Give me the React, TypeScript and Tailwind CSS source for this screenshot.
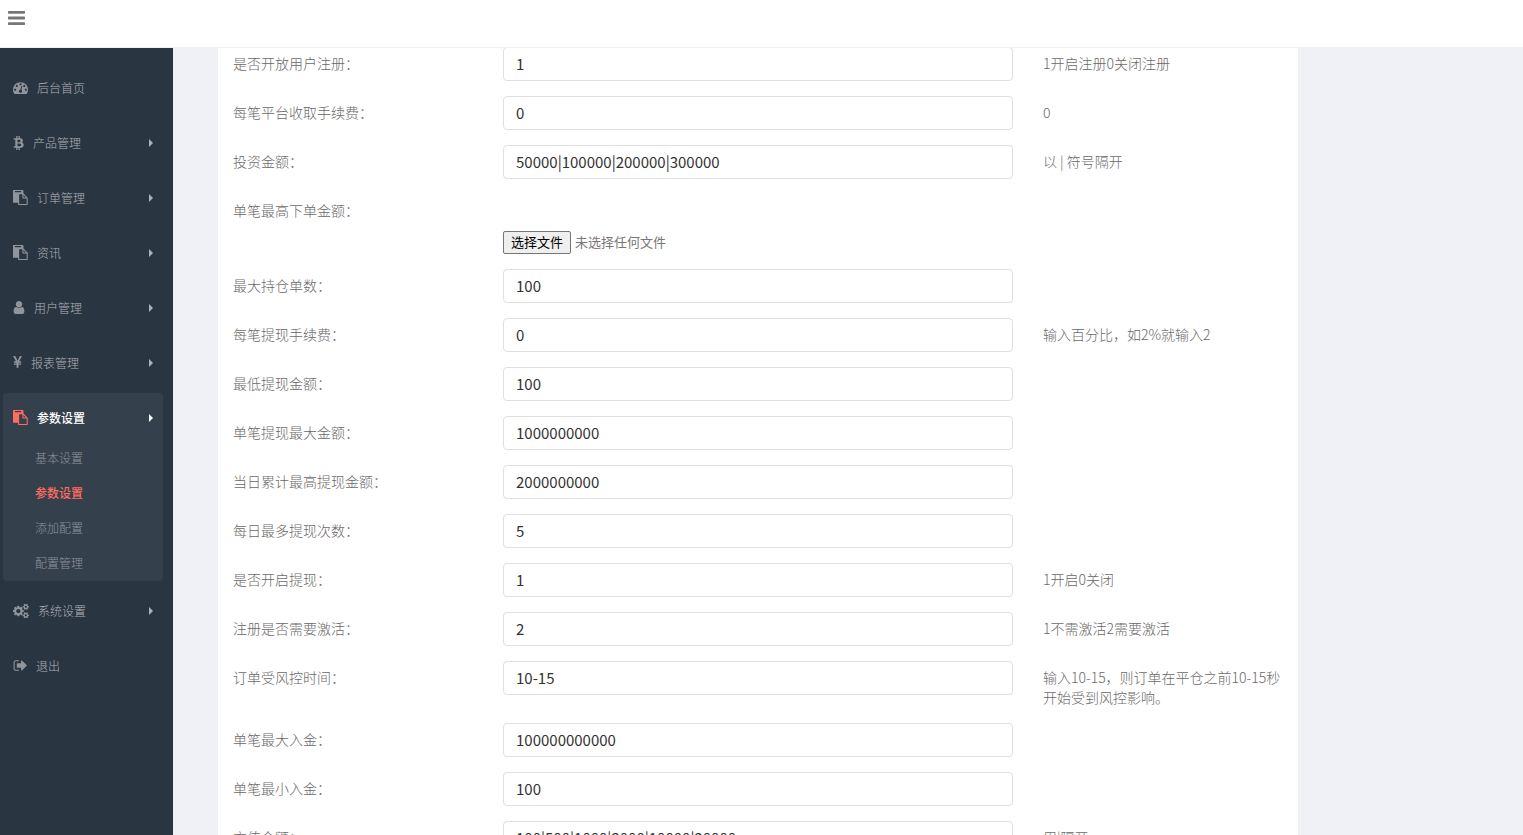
import { useState } from "react";

type Glyph = { box: string; size: string; path: string };

const smallCog =
  "v140q0 16-149 31-12 27-30 52 51 113 51 138 0 4-4 7-122 71-124 71-8 0-46-47t-52-68q-20 2-30 2t-30-2q-14 21-52 68t-46 47q-2 0-124-71-4-3-4-7 0-25 51-138-18-25-30-52-149-15-149-31v-140q0-16 149-31 13-29 30-52-51-113-51-138 0-4 4-7 4-2 35-20t59-34 30-16q8 0 46 46.5t52 67.5q20-2 30-2t30 2q51-71 92-112l6-2q4 0 124 70 4 3 4 7 0 25-51 138 17 23 30 52 149 15 149 31z";

const smallDot =
  "q0-53-37.5-90.5t-90.5-37.5-90.5 37.5-37.5 90.5 37.5 90.5 90.5 37.5 90.5-37.5 37.5-90.5z";

const glyphs = {
  dashboard: {
    box: "0 0 1792 1792",
    size: "w-[15px]",
    path:
      "M384 1152" + smallDot + "m192-448" + smallDot +
      "m428 481l101-382q6-26-7.5-48.5t-38.5-29.5-48 6.5-30 39.5l-101 382q-60 5-107 43.5t-63 98.5q-20 77 20 146t117 89 146-20 89-117q16-60-6-117t-72-91zm660-33" +
      smallDot + "m-640-640" + smallDot + "m448 192" + smallDot +
      "m320 448q0 261-141 483-19 29-54 29h-1402q-35 0-54-29-141-221-141-483 0-182 71-348t191-286 286-191 348-71 348 71 286 191 191 286 71 348z",
  },
  bitcoin: {
    box: "0 0 1280 1792",
    size: "w-[11px]",
    path: "M1167 640q18 182-131 258 117 28 175 103t45 214q-7 71-32.5 125t-64.5 89-97 58.5-121.5 34.5-145.5 15v255h-154v-251q-80 0-122-1v252h-154v-255q-18 0-54-.5t-55-.5h-200l31-183h111q50 0 58-51v-402h16q-6-1-16-1v-287q-13-68-89-68h-111v-164l212 1q64 0 97-1v-252h154v247q82-2 122-2v-245h154v252q79 7 140 22.5t113 45 82.5 78 36.5 114.5zm-215 545q0-36-15-64t-37-46-57.5-30.5-65.5-18.5-74-9-69-3-64.5 1-47.5 1v338q8 0 37 .5t48 .5 53-1.5 58.5-4 57-8.5 55.5-14 47.5-21 39.5-30 24.5-40 9.5-51zm-71-476q0-33-12.5-58.5t-30.5-42-48-28-55-16.5-61.5-8-58-2.5-54 1-39.5.5v307q5 0 34.5.5t46.5 0 50-2 55-5.5 51.5-11 48.5-18.5 37-27 27-38.5 9-51z",
  },
  paste: {
    box: "64 0 1728 1792",
    size: "w-[15px]",
    path: "M768 1664h896v-640h-416q-40 0-68-28t-28-68v-416h-384v1152zm256-1440v-64q0-13-9.5-22.5t-22.5-9.5h-704q-13 0-22.5 9.5t-9.5 22.5v64q0 13 9.5 22.5t22.5 9.5h704q13 0 22.5-9.5t9.5-22.5zm256 672h299l-299-299v299zm512 128v672q0 40-28 68t-68 28h-960q-40 0-68-28t-28-68v-160h-544q-40 0-68-28t-28-68v-1344q0-40 28-68t68-28h1088q40 0 68 28t28 68v328q21 13 36 28l408 408q28 28 48 76t20 88z",
  },
  user: {
    box: "256 0 1280 1792",
    size: "w-[12px]",
    path: "M1536 1399q0 109-62.5 187t-150.5 78h-854q-88 0-150.5-78t-62.5-187q0-85 8.5-160.5t31.5-152 58.5-131 94-89 134.5-34.5q131 128 313 128t313-128q76 0 134.5 34.5t94 89 58.5 131 31.5 152 8.5 160.5zm-256-887q0 159-112.5 271.5t-271.5 112.5-271.5-112.5-112.5-271.5 112.5-271.5 271.5-112.5 271.5 112.5 112.5 271.5z",
  },
  yen: {
    box: "380 0 1027 1792",
    size: "w-[9px]",
    path: "M985.5 1536h-172q-13 0-22.5-9t-9.5-23v-330h-288q-13 0-22.5-9t-9.5-23v-103q0-13 9.5-22.5t22.5-9.5h288v-85h-288q-13 0-22.5-9t-9.5-23v-104q0-13 9.5-22.5t22.5-9.5h214l-321-578q-8-16 0-32 10-16 28-16h194q19 0 29 18l215 425q19 38 56 125 10-24 30.5-68t27.5-61l191-420q8-19 29-19h191q17 0 27 16 9 14 1 31l-313 579h215q13 0 22.5 9.5t9.5 22.5v104q0 14-9.5 23t-22.5 9h-290v85h290q13 0 22.5 9.5t9.5 22.5v103q0 14-9.5 23t-22.5 9h-290v330q0 13-9.5 22.5t-22.5 9.5z",
  },
  cogs: {
    box: "0 0 1920 1792",
    size: "w-[16px]",
    path:
      "M896 960q0-106-75-181t-181-75-181 75-75 181 75 181 181 75 181-75 75-181zm768 512q0-52-38-90t-90-38-90 38-38 90q0 53 37.5 90.5t90.5 37.5 90.5-37.5 37.5-90.5zm0-1024q0-52-38-90t-90-38-90 38-38 90q0 53 37.5 90.5t90.5 37.5 90.5-37.5 37.5-90.5zm-384 421v185q0 10-7 19.5t-16 10.5l-155 24q-11 35-32 76 34 48 90 115 7 10 7 20 0 12-7 19-23 30-82.5 89.5t-78.5 59.5q-11 0-21-7l-115-90q-37 19-77 31-11 108-23 155-7 24-30 24h-186q-11 0-20-7.5t-10-17.5l-23-153q-34-10-75-31l-118 89q-7 7-20 7-11 0-21-8-144-133-144-160 0-9 7-19 10-14 41-53t47-61q-23-44-35-82l-152-24q-10-1-17-9.5t-7-19.5v-185q0-10 7-19.5t16-10.5l155-24q11-35 32-76-34-48-90-115-7-11-7-20 0-12 7-20 22-30 82-89t79-59q11 0 21 7l115 90q34-18 77-32 11-108 23-154 7-24 30-24h186q11 0 20 7.5t10 17.5l23 153q34 10 75 31l118-89q8-7 20-7 11 0 21 8 144 133 144 160 0 9-7 19-12 16-42 54t-45 60q23 48 34 82l152 23q10 2 17 10.5t7 19.5zm640 533" +
      smallCog + "m0-1024" + smallCog,
  },
  exit: {
    box: "0 0 1664 1792",
    size: "w-[14px]",
    path: "M704 1440q0 4 1 20t.5 26.5-3 23.5-10 19.5-20.5 6.5h-320q-119 0-203.5-84.5t-84.5-203.5v-704q0-119 84.5-203.5t203.5-84.5h320q13 0 22.5 9.5t9.5 22.5q0 4 1 20t.5 26.5-3 23.5-10 19.5-20.5 6.5h-320q-66 0-113 47t-47 113v704q0 66 47 113t113 47h312l11.5 1 11.5 3 8 5.5 7 9 2 13.5zm928-544q0 26-19 45l-544 544q-19 19-45 19t-45-19-19-45v-288h-448q-26 0-45-19t-19-45v-384q0-26 19-45t45-19h448v-288q0-26 19-45t45-19 45 19l544 544q19 19 19 45z",
  },
} satisfies Record<string, Glyph>;

function Icon({ name }: { name: keyof typeof glyphs }) {
  const g: Glyph = glyphs[name];
  return (
    <svg viewBox={g.box} className={`h-[15px] shrink-0 ${g.size}`} fill="currentColor" aria-hidden="true">
      <path d={g.path} />
    </svg>
  );
}

function Caret() {
  return (
    <svg viewBox="0 0 4 8" className="mr-2.5 ml-auto h-2 w-1" fill="currentColor" aria-hidden="true">
      <path d="M0 0l4 4-4 4z" />
    </svg>
  );
}

type MenuItem = { icon: keyof typeof glyphs; text: string; leaf?: boolean; children?: string[] };

const menu: MenuItem[] = [
  { icon: "dashboard", text: "后台首页", leaf: true },
  { icon: "bitcoin", text: "产品管理" },
  { icon: "paste", text: "订单管理" },
  { icon: "paste", text: "资讯" },
  { icon: "user", text: "用户管理" },
  { icon: "yen", text: "报表管理" },
  { icon: "paste", text: "参数设置", children: ["基本设置", "参数设置", "添加配置", "配置管理"] },
  { icon: "cogs", text: "系统设置" },
  { icon: "exit", text: "退出", leaf: true },
];

function Sidebar() {
  return (
    <nav className="w-[173px] shrink-0 bg-[#2a3542] pt-[15px] pr-2.5 pl-[3px] text-xs text-[#aeb2b7]">
      <ul className="flex flex-col gap-[5px]">
        {menu.map((item) => (
          <li key={item.text} className={item.children ? "rounded bg-[#35404d] pb-[3px]" : ""}>
            <a
              href="#"
              className={`flex h-[50px] items-center pl-2.5 ${item.children ? "font-medium text-white" : "font-light"}`}
            >
              <span className={`pb-0.5 ${item.children ? "text-[#ff6c60]" : "text-[#8f959b]"}`}>
                <Icon name={item.icon} />
              </span>
              <span className="ml-[9px]">{item.text}</span>
              {!item.leaf && <Caret />}
            </a>
            {item.children && (
              <ul className="flex flex-col gap-[5px] pl-8">
                {item.children.map((child) => (
                  <li key={child}>
                    <a
                      href="#"
                      className={`flex h-[30px] items-center ${
                        child === item.text ? "font-medium text-[#ff6c60]" : "font-light text-[#8f959b]"
                      }`}
                    >
                      {child}
                    </a>
                  </li>
                ))}
              </ul>
            )}
          </li>
        ))}
      </ul>
    </nav>
  );
}

type Field = { id: string; label: string; value?: string; hint?: string; file?: boolean };

const fields: Field[] = [
  { id: "register", label: "是否开放用户注册", value: "1", hint: "1开启注册0关闭注册" },
  { id: "fee", label: "每笔平台收取手续费", value: "0", hint: "0" },
  { id: "amounts", label: "投资金额", value: "50000|100000|200000|300000", hint: "以 | 符号隔开" },
  { id: "order-max", label: "单笔最高下单金额", file: true },
  { id: "positions", label: "最大持仓单数", value: "100" },
  { id: "withdraw-fee", label: "每笔提现手续费", value: "0", hint: "输入百分比，如2%就输入2" },
  { id: "withdraw-min", label: "最低提现金额", value: "100" },
  { id: "withdraw-max", label: "单笔提现最大金额", value: "1000000000" },
  { id: "withdraw-day", label: "当日累计最高提现金额", value: "2000000000" },
  { id: "withdraw-times", label: "每日最多提现次数", value: "5" },
  { id: "withdraw-open", label: "是否开启提现", value: "1", hint: "1开启0关闭" },
  { id: "activate", label: "注册是否需要激活", value: "2", hint: "1不需激活2需要激活" },
  { id: "risk", label: "订单受风控时间", value: "10-15", hint: "输入10-15，则订单在平仓之前10-15秒开始受到风控影响。" },
  { id: "deposit-max", label: "单笔最大入金", value: "100000000000" },
  { id: "deposit-min", label: "单笔最小入金", value: "100" },
  { id: "recharge", label: "充值金额", value: "100|500|1000|2000|10000|20000", hint: "用|隔开" },
];

function FilePicker({ id }: { id: string }) {
  const [name, setName] = useState("未选择任何文件");
  return (
    <label className="relative mt-9 flex h-6 items-center gap-1 text-[13px] font-normal text-[#7a7676]">
      <input
        id={id}
        type="file"
        className="sr-only"
        onChange={(e) => setName(e.target.files?.[0]?.name ?? "未选择任何文件")}
      />
      <span className="flex h-[23px] items-center rounded-[2px] border border-[#767676] bg-[#efefef] px-[7px] text-black">
        选择文件
      </span>
      <span>{name}</span>
    </label>
  );
}

function FieldRow({ field }: { field: Field }) {
  return (
    <div className="grid grid-cols-12">
      <label htmlFor={field.id} className="col-span-3 px-[15px] pt-1.5 pb-px">
        {field.label}：
      </label>
      <div className="col-span-6 px-[15px]">
        {field.file ? (
          <FilePicker id={field.id} />
        ) : (
          <input
            id={field.id}
            type="text"
            defaultValue={field.value}
            className="block h-[34px] w-full rounded border border-[#dfdfe1] bg-white px-3 pb-0.5 text-[15px] font-normal text-[#343232]"
          />
        )}
      </div>
      <p className="col-span-3 px-[15px] pt-1.5 pb-px">{field.hint}</p>
    </div>
  );
}

export default function App() {
  return (
    <div className="flex h-screen flex-col overflow-hidden bg-[#f0f1f7] font-['Noto_Sans_CJK_SC',sans-serif]">
      <header className="flex h-12 shrink-0 border-b border-[#f1f2f7] bg-white px-2 pt-2">
        <button type="button" aria-label="菜单" className="h-5 text-[#797676]">
          <svg viewBox="128 0 1536 1792" className="h-5 w-[17px]" fill="currentColor" aria-hidden="true">
            <path d="M1664 1344v128q0 26-19 45t-45 19h-1408q-26 0-45-19t-19-45v-128q0-26 19-45t45-19h1408q26 0 45 19t19 45zm0-512v128q0 26-19 45t-45 19h-1408q-26 0-45-19t-19-45v-128q0-26 19-45t45-19h1408q26 0 45 19t19 45zm0-512v128q0 26-19 45t-45 19h-1408q-26 0-45-19t-19-45v-128q0-26 19-45t45-19h1408q26 0 45 19t19 45z" />
          </svg>
        </button>
      </header>
      <div className="flex min-h-0 grow">
        <Sidebar />
        <main className="min-w-0 grow overflow-hidden">
          <form className="-mt-px ml-[45px] flex w-4/5 flex-col gap-[15px] bg-white pb-[15px] text-sm/5 font-light text-[#6b6868]">
            {fields.map((f) => (
              <FieldRow key={f.id} field={f} />
            ))}
          </form>
        </main>
      </div>
    </div>
  );
}
